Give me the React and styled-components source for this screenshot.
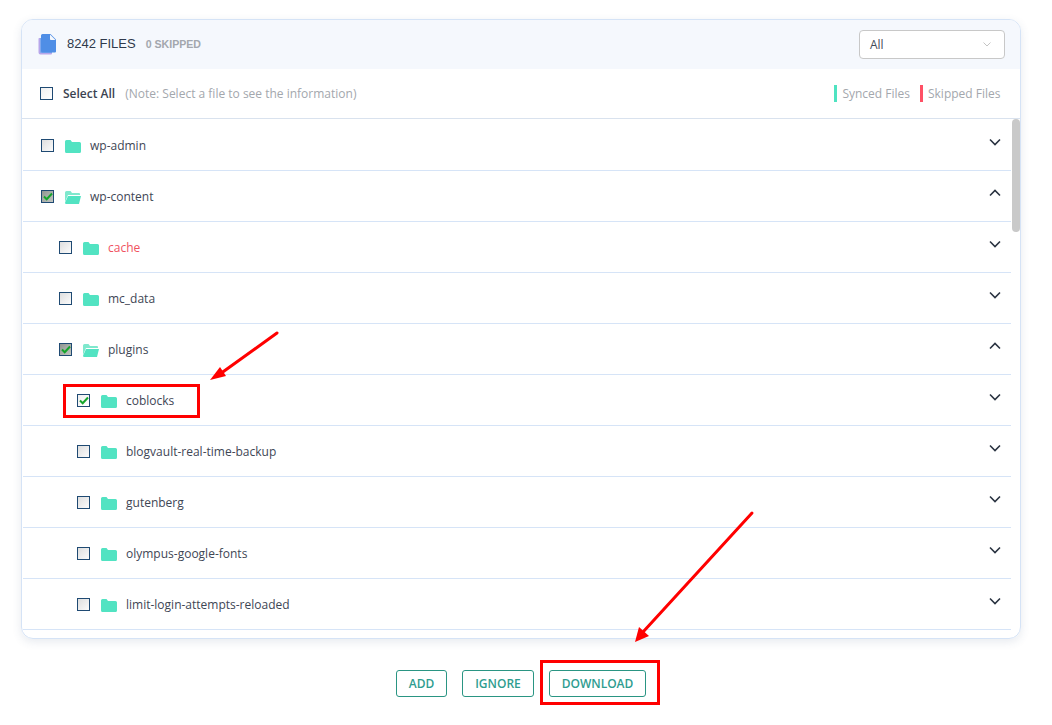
import React from 'react'
import styled, { createGlobalStyle } from 'styled-components'

const GlobalStyle = createGlobalStyle`
  html, body {
    margin: 0;
    background: #fff;
    font-family: "Open Sans", "Liberation Sans", sans-serif;
  }
`

const Page = styled.div`
  position: relative;
  width: 1052px;
  height: 725px;
  padding: 19px 0 0 21px;
  box-sizing: border-box;
  overflow: hidden;
`

const Card = styled.div`
  position: relative;
  width: 1000px;
  height: 620px;
  box-sizing: border-box;
  border: 1px solid #d5e3f6;
  border-radius: 12px;
  overflow: hidden;
  box-shadow: 0 3px 10px rgba(60, 80, 120, 0.12);
`

const Header = styled.div`
  height: 49px;
  background: #f5f8fd;
  display: flex;
  align-items: center;
  padding: 0 15px 0 16px;
`

const FileCount = styled.span`
  margin: -2px 0 0 11px;
  font-family: "Liberation Sans", sans-serif;
  font-size: 13px;
  color: #2f3a4c;
`

const Skipped = styled.span`
  margin: -2px 0 0 10px;
  font-family: "Liberation Sans", sans-serif;
  font-size: 10.6px;
  font-weight: 700;
  color: #a3a7ad;
`

const Select = styled.div`
  margin-left: auto;
  width: 146px;
  height: 29px;
  box-sizing: border-box;
  border: 1px solid #c8c8c8;
  border-radius: 4px;
  background: #fff;
  display: flex;
  align-items: center;
  justify-content: space-between;
  padding: 0 13px 0 10px;
  font-size: 12px;
  color: #444b57;
`

const Toolbar = styled.div`
  height: 50px;
  box-sizing: border-box;
  border-bottom: 1px solid #d9e2ee;
  display: flex;
  align-items: center;
  padding: 0 19.5px 1px 18px;
  font-size: 12px;
`

const SelectAll = styled.span`
  margin-left: 10px;
  font-weight: 600;
  color: #3b4351;
`

const Note = styled.span`
  margin-left: 10px;
  color: #a3a7ad;
`

const Legend = styled.div`
  margin-left: auto;
  display: flex;
  gap: 10px;
`

const LegendItem = styled.span`
  border-left: 3px solid ${p => p.$color};
  padding-left: 5px;
  line-height: 17px;
  color: #a3a7ad;
`

const List = styled.div`
  width: 988px;
  margin: 1px 0 0 1px;
`

const Row = styled.div`
  height: 51px;
  box-sizing: border-box;
  border-bottom: 1px solid #d6e4f7;
  display: flex;
  align-items: center;
  padding: 1px 10px 0 ${p => 18 + p.$depth * 18}px;
  font-size: 12px;
`

const boxFill = p => {
  if (p.$checked) return 'linear-gradient(135deg, #8f9690, #c2c6c2)'
  if (p.$plain) return 'linear-gradient(135deg, #efefef, #ffffff)'
  return 'linear-gradient(135deg, #dedede, #fbfbfb)'
}

const Box = styled.span`
  width: 13px;
  height: 13px;
  box-sizing: border-box;
  border: 1px solid #1f4a73;
  background: ${boxFill};
  display: flex;
  align-items: center;
  justify-content: center;
  flex: none;
`

const Name = styled.span`
  margin-left: 9px;
  color: ${p => (p.$skipped ? '#f0525f' : '#3e4655')};
`

const Chevron = styled.span`
  margin: -8px 0 0 auto;
  display: flex;
`

const Scrollbar = styled.div`
  position: absolute;
  right: 0;
  top: 99px;
  width: 8px;
  height: 113px;
  border-radius: 4px;
  background: #c9c9c9;
`

const Buttons = styled.div`
  display: flex;
  justify-content: center;
  gap: 15px;
  width: 1000px;
  margin-top: 31px;
`

const Button = styled.button`
  width: ${p => p.$width}px;
  height: 27px;
  box-sizing: border-box;
  padding: 0;
  background: #fff;
  border: 1px solid #2a9583;
  border-radius: 3px;
  font-family: "Open Sans", sans-serif;
  font-size: 12px;
  font-weight: 600;
  color: #2f9d90;
`

const Highlight = styled.div`
  position: absolute;
  left: ${p => p.$x}px;
  top: ${p => p.$y}px;
  width: ${p => p.$w}px;
  height: ${p => p.$h}px;
  box-sizing: border-box;
  border: 3px solid #ff0000;
  pointer-events: none;
`

const Arrows = styled.svg`
  position: absolute;
  left: 0;
  top: 0;
  pointer-events: none;
`

const FileIcon = () => (
  <svg width="18" height="21" viewBox="0 0 18 21" style={{ flex: 'none' }}>
    <path d="M1 4h2v14h11v1.5a1 1 0 0 1-1 1H2.5A2 2 0 0 1 0.5 18.5V5a1 1 0 0 1 .5-1z" fill="#b7a6ea" />
    <path d="M2 4h2v13h10v2H3a1 1 0 0 1-1-1z" fill="#7fa8ee" />
    <path d="M3 1.5A1.5 1.5 0 0 1 4.5 0h8L18 5.5V17.5a1 1 0 0 1-1 1H4.5A1.5 1.5 0 0 1 3 17z" fill="#4f8ee6" />
    <path d="M12 0.5l5.5 5.5H12.8a.8.8 0 0 1-.8-.8z" fill="#f5f8fd" />
  </svg>
)

const Folder = ({ open }) => (
  <svg width="16" height="13" viewBox="0 0 16 13" style={{ marginLeft: 11, marginTop: 1, flex: 'none' }}>
    {open ? (
      <>
        <path d="M0 1.5A1.5 1.5 0 0 1 1.5 0h4L7 2h7a1 1 0 0 1 1 1v1H3L0 11z" fill="#7fe8cd" />
        <path d="M3 5h13l-2 8H1.2A1.2 1.2 0 0 1 0 11.8z" fill="#52e3c2" />
      </>
    ) : (
      <path d="M0 1.5A1.5 1.5 0 0 1 1.5 0h4L7 2h7.5A1.5 1.5 0 0 1 16 3.5v8a1.5 1.5 0 0 1-1.5 1.5h-13A1.5 1.5 0 0 1 0 11.5z" fill="#52e3c2" />
    )}
  </svg>
)

const Tick = () => (
  <svg width="10" height="9" viewBox="0 0 10 9">
    <path d="M1 4.5l2.7 2.7L9 1.5" fill="none" stroke="#14a52a" strokeWidth="2" />
  </svg>
)

const Caret = ({ up }) => (
  <svg width="12" height="8" viewBox="0 0 12 8">
    <path d={up ? 'M1 6.5l5-5 5 5' : 'M1 1.5l5 5 5-5'} fill="none" stroke="#2b3442" strokeWidth="1.6" />
  </svg>
)

const rows = [
  { name: 'wp-admin', depth: 0 },
  { name: 'wp-content', depth: 0, checked: true, open: true },
  { name: 'cache', depth: 1, skipped: true },
  { name: 'mc_data', depth: 1 },
  { name: 'plugins', depth: 1, checked: true, open: true },
  { name: 'coblocks', depth: 2, ticked: true },
  { name: 'blogvault-real-time-backup', depth: 2 },
  { name: 'gutenberg', depth: 2 },
  { name: 'olympus-google-fonts', depth: 2 },
  { name: 'limit-login-attempts-reloaded', depth: 2 }
]

export default function App() {
  return (
    <Page>
      <GlobalStyle />
      <Card>
        <Header>
          <FileIcon />
          <FileCount>8242 FILES</FileCount>
          <Skipped>0 SKIPPED</Skipped>
          <Select>
            All
            <svg width="8" height="5" viewBox="0 0 8 5">
              <path d="M0.5 0.5L4 4l3.5-3.5" fill="none" stroke="#c4c4c4" />
            </svg>
          </Select>
        </Header>
        <Toolbar>
          <Box $plain />
          <SelectAll>Select All</SelectAll>
          <Note>(Note: Select a file to see the information)</Note>
          <Legend>
            <LegendItem $color="#4fe3c1">Synced Files</LegendItem>
            <LegendItem $color="#ff5065">Skipped Files</LegendItem>
          </Legend>
        </Toolbar>
        <List>
          {rows.map(r => (
            <Row key={r.name} $depth={r.depth}>
              <Box $checked={r.checked} $plain={r.ticked}>{(r.checked || r.ticked) && <Tick />}</Box>
              <Folder open={r.open} />
              <Name $skipped={r.skipped}>{r.name}</Name>
              <Chevron><Caret up={r.open} /></Chevron>
            </Row>
          ))}
        </List>
        <Scrollbar />
      </Card>
      <Buttons>
        <Button $width={51}>ADD</Button>
        <Button $width={72}>IGNORE</Button>
        <Button $width={97}>DOWNLOAD</Button>
      </Buttons>
      <Highlight $x={63} $y={384} $w={137} $h={34} />
      <Highlight $x={540} $y={660} $w={120} $h={45} />
      <Arrows width="1052" height="725" viewBox="0 0 1052 725">
        <path d="M277 333L220 374" stroke="#ff0000" strokeWidth="3" fill="none" strokeLinecap="round" />
        <path d="M210 380l16-4-6-9z" fill="#ff0000" />
        <path d="M752 513L643 632" stroke="#ff0000" strokeWidth="3" fill="none" strokeLinecap="round" />
        <path d="M635 642l14-6-10-9z" fill="#ff0000" />
      </Arrows>
    </Page>
  )
}
